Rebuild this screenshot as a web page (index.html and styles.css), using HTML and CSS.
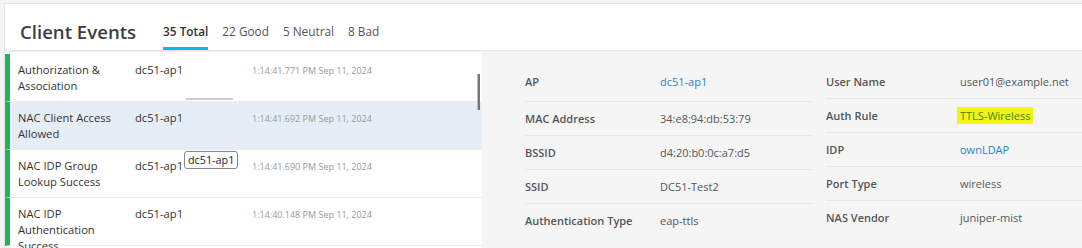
FILE: index.html
```html
<!DOCTYPE html>
<html lang="en">
<head>
    <meta charset="UTF-8">
    <meta name="viewport" content="width=device-width, initial-scale=1.0">
    <title>Client Events</title>
    <link rel="stylesheet" href="styles.css">
</head>
<body>
    <div class="card">
        <div class="header">
            <h1>Client Events</h1>
            <div class="tabs">
                <span class="tab active">35 Total</span>
                <span class="tab">22 Good</span>
                <span class="tab">5 Neutral</span>
                <span class="tab">8 Bad</span>
            </div>
        </div>
        <div class="content">
            <div class="list">
                <div class="row">
                    <div class="name">Authorization &amp; Association</div>
                    <div class="ap">dc51-ap1</div>
                    <div class="time">1:14:41.771 PM Sep 11, 2024</div>
                </div>
                <div class="row selected">
                    <div class="name">NAC Client Access Allowed</div>
                    <div class="ap">dc51-ap1</div>
                    <div class="time">1:14:41.692 PM Sep 11, 2024</div>
                </div>
                <div class="row">
                    <div class="name">NAC IDP Group Lookup Success</div>
                    <div class="ap">dc51-ap1</div>
                    <div class="time">1:14:41.690 PM Sep 11, 2024</div>
                </div>
                <div class="row">
                    <div class="name">NAC IDP Authentication Success</div>
                    <div class="ap">dc51-ap1</div>
                    <div class="time">1:14:40.148 PM Sep 11, 2024</div>
                </div>
                <span class="tooltip">dc51-ap1</span>
                <span class="vscroll"></span>
                <span class="hscroll"></span>
            </div>
            <div class="details">
                <div class="col">
                    <div class="item first"><span class="label">AP</span><span class="value link">dc51-ap1</span></div>
                    <div class="item"><span class="label">MAC Address</span><span class="value">34:e8:94:db:53:79</span></div>
                    <div class="item"><span class="label">BSSID</span><span class="value">d4:20:b0:0c:a7:d5</span></div>
                    <div class="item"><span class="label">SSID</span><span class="value">DC51-Test2</span></div>
                    <div class="item"><span class="label">Authentication Type</span><span class="value">eap-ttls</span></div>
                </div>
                <div class="col">
                    <div class="item"><span class="label">User Name</span><span class="value">user01@example.net</span></div>
                    <div class="item"><span class="label">Auth Rule</span><span class="value"><mark>TTLS-Wireless</mark></span></div>
                    <div class="item"><span class="label">IDP</span><span class="value link">ownLDAP</span></div>
                    <div class="item"><span class="label">Port Type</span><span class="value">wireless</span></div>
                    <div class="item"><span class="label">NAS Vendor</span><span class="value">juniper-mist</span></div>
                </div>
            </div>
        </div>
    </div>
</body>
</html>
```

FILE: styles.css
```css
body {
    margin: 0;
    background: #f4f4f4;
    font-family: "Open Sans", sans-serif;
    color: #333;
    overflow: hidden;
}
.card {
    margin: 3px 0 0 4px;
    background: #fff;
    border-top: 1px solid #e4e4e4;
    border-left: 1px solid #e4e4e4;
    height: 245px;
}
.header {
    display: flex;
    align-items: flex-end;
    height: 46px;
    padding-left: 15px;
    border-bottom: 1px solid #e6e6e6;
}
h1 {
    margin: 0 27px 6px 0;
    font-size: 18.6px;
    font-weight: 600;
    color: #3d3d3d;
}
.tabs {
    display: flex;
    gap: 14px;
}
.tab {
    font-size: 11.8px;
    color: #555;
    padding-bottom: 8px;
    border-bottom: 3px solid transparent;
}
.tab.active {
    font-weight: 600;
    color: #333;
    border-bottom-color: #08b7ef;
}
.content {
    display: flex;
    height: 198px;
}
.list {
    position: relative;
    width: 477px;
    padding-top: 2px;
    border-top: 1px solid #eee;
    background: #fff;
}
.row {
    display: flex;
    border-left: 5px solid #1fb45a;
    border-bottom: 1px solid #ececec;
    font-size: 11.2px;
    line-height: 16px;
    box-sizing: border-box;
    height: 48px;
    padding-top: 8px;
}
.row.selected { background: #e5eef7; }
.name {
    width: 117px;
    padding-left: 8px;
    color: #333;
}
.ap { width: 117px; }
.time {
    font-size: 9px;
    color: #999;
    padding-top: 1px;
}
.tooltip {
    position: absolute;
    left: 179px;
    top: 99px;
    padding: 0 3px;
    font-size: 10.8px;
    line-height: 16px;
    background: #fff;
    border: 1px solid #888;
    border-radius: 3px;
    color: #222;
}
.vscroll {
    position: absolute;
    left: 472px;
    top: 22px;
    width: 2px;
    height: 36px;
    background: #777;
    border-left: 1px solid #bbb;
}
.hscroll {
    position: absolute;
    left: 181px;
    top: 46px;
    width: 47px;
    height: 2px;
    background: #ccc;
}
.details {
    flex: 1;
    background: #f5f5f5;
    display: grid;
    grid-template-columns: 287px 1fr;
    column-gap: 14px;
    align-content: start;
    padding: 14px 0 0 43px;
}
.item {
    display: flex;
    height: 34px;
    box-sizing: border-box;
    padding-top: 8px;
    line-height: 17px;
    font-size: 11px;
    border-bottom: 1px solid #e6e6e6;
    color: #555;
}
.col .item:last-child { border-bottom: none; }
.item.first { height: 37px; }
.label {
    width: 135px;
    font-weight: 600;
    color: #555;
}
.col:last-child .label { width: 134px; }
.value { color: #555; }
.link { color: #2a7fcb; }
mark {
    background: #f3f517;
    color: #3e8a0a;
    padding: 1px 3px;
    margin-left: -3px;
}
```
